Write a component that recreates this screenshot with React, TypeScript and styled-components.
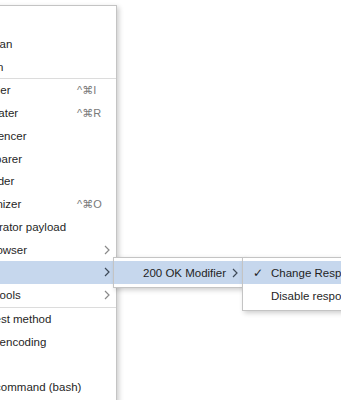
import styled, { createGlobalStyle } from "styled-components";

const GlobalStyle = createGlobalStyle`
  html, body {
    margin: 0;
    padding: 0;
    background: #ffffff;
    overflow: hidden;
  }
  body {
    font-family: "Liberation Sans", "DejaVu Sans", sans-serif;
    -webkit-font-smoothing: antialiased;
  }
`;

const HIGHLIGHT = "#c6d7ed";

function Chevron({ active }: { active?: boolean }) {
  return (
    <svg width="6" height="10" viewBox="0 0 6 10">
      <polyline
        points="1,1 5,5 1,9"
        fill="none"
        stroke={active ? "#3e4a58" : "#8a8a8a"}
        strokeWidth="1.2"
      />
    </svg>
  );
}

type Entry =
  | { sep: true }
  | { label: string; shortcut?: string; arrow?: boolean; open?: boolean };

const mainItems: Entry[] = [
  { label: "Scan" },
  { label: "Do passive scan" },
  { label: "Do active scan" },
  { sep: true },
  { label: "Send to Intruder", shortcut: "^⌘I" },
  { label: "Send to Repeater", shortcut: "^⌘R" },
  { label: "Send to Sequencer" },
  { label: "Send to Comparer" },
  { label: "Send to Decoder" },
  { label: "Send to Organizer", shortcut: "^⌘O" },
  { label: "Insert Collaborator payload" },
  { label: "Request in browser", arrow: true },
  { label: "Extensions", arrow: true, open: true },
  { label: "Engagement tools", arrow: true },
  { sep: true },
  { label: "Change request method" },
  { label: "Change body encoding" },
  { label: "Copy URL" },
  { label: "Copy as curl command (bash)" },
  { label: "Copy to file" },
  { label: "Paste from file" },
];

export default function App() {
  return (
    <Page>
      <GlobalStyle />
      <MainMenu>
        {mainItems.map((item, i) =>
          "sep" in item ? (
            <Separator key={i} />
          ) : (
            <MainRow key={i} $active={item.open}>
              <Label>{item.label}</Label>
              <Shortcut>{item.shortcut}</Shortcut>
              <ArrowCell>{item.arrow && <Chevron active={item.open} />}</ArrowCell>
              {item.open && (
                <ExtensionMenu>
                  <ExtensionRow $active>
                    <Label>200 OK Modifier</Label>
                    <ArrowCell>
                      <Chevron active />
                    </ArrowCell>
                    <ActionMenu>
                      <ActionRow $active>
                        <Check>✓</Check>
                        <Label>Change Response to 200 OK</Label>
                      </ActionRow>
                      <ActionRow>
                        <Check />
                        <Label>Disable response modification</Label>
                      </ActionRow>
                    </ActionMenu>
                  </ExtensionRow>
                </ExtensionMenu>
              )}
            </MainRow>
          )
        )}
      </MainMenu>
    </Page>
  );
}

const Page = styled.div`
  height: 400px;
  padding-top: 5px;
  box-sizing: border-box;
  overflow: hidden;
`;

const Popup = styled.div`
  box-sizing: border-box;
  background: #ffffff;
  border: 1px solid #c4c4c4;
  box-shadow: 2px 2px 5px rgba(0, 0, 0, 0.2);
  padding: 3px 0;
`;

const MainMenu = styled(Popup)`
  position: relative;
  width: 209px;
  margin-left: -92px;
  padding-top: 3.75px;
`;

const BaseRow = styled.div<{ $active?: boolean }>`
  position: relative;
  display: grid;
  align-items: center;
  height: 22.75px;
  font-size: 11.5px;
  color: #1f1f1f;
  white-space: nowrap;
  background: ${(p) => (p.$active ? HIGHLIGHT : "transparent")};
`;

const MainRow = styled(BaseRow)`
  grid-template-columns: 1fr 24px 9px;
  padding: 0 6px 0 19px;
`;

const Label = styled.span`
  overflow: visible;
`;

const Shortcut = styled.span`
  color: #7a7a7a;
  font-size: 11px;
`;

const ArrowCell = styled.span`
  display: flex;
  justify-content: flex-end;
  align-items: center;
`;

const Separator = styled.div`
  height: 1px;
  background: #dcdcdc;
`;

const ExtensionMenu = styled(Popup)`
  position: absolute;
  top: -4px;
  left: calc(100% - 3px);
  width: 132px;
  z-index: 1;
`;

const ExtensionRow = styled(BaseRow)`
  height: 23px;
  grid-template-columns: 1fr 9px;
  padding: 0 6px 0 29px;
`;

const ActionMenu = styled(Popup)`
  position: absolute;
  top: -4px;
  left: calc(100% - 2px);
  width: 200px;
  z-index: 2;
`;

const ActionRow = styled(BaseRow)`
  height: 23px;
  grid-template-columns: 18px 1fr;
  padding: 0 8px 0 10px;
`;

const Check = styled.span`
  font-family: "DejaVu Sans", sans-serif;
  font-size: 12px;
  color: #1f1f1f;
`;
